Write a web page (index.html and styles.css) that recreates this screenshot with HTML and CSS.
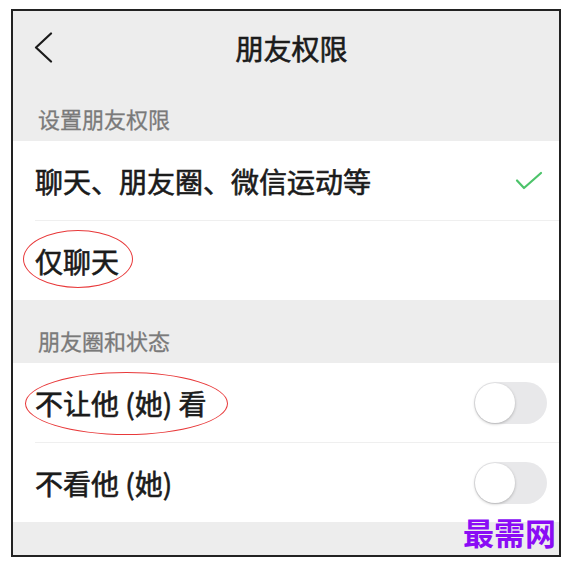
FILE: index.html
```html
<html>
<head>
<meta charset="utf-8">
<link rel="stylesheet" href="styles.css">
</head>
<body>
<div class="frame">

<div class="nav">
	<div class="back">
		<svg width="22" height="32" viewBox="0 0 22 32">
			<polyline points="17,1.5 2,15.5 17,29.5" fill="none" stroke="#1b1b1b" stroke-width="2.2" stroke-linecap="round" stroke-linejoin="round"/>
		</svg>
	</div>
	<div class="title">朋友权限</div>
	<div></div>
</div>

<div class="group-title first">设置朋友权限</div>
<div class="list">
	<div class="cell">
		<div class="cell-body">
			<span class="label">聊天、朋友圈、微信运动等</span>
			<svg class="check" width="28" height="20" viewBox="0 0 28 20">
				<polyline points="2,9.5 9,17 26,2" fill="none" stroke="#4cc36a" stroke-width="2.2" stroke-linecap="round" stroke-linejoin="round"/>
			</svg>
		</div>
	</div>
	<div class="cell">
		<div class="cell-body">
			<span class="label">仅聊天</span>
		</div>
		<div class="mark mark-small"></div>
	</div>
</div>

<div class="group-title">朋友圈和状态</div>
<div class="list">
	<div class="cell">
		<div class="cell-body">
			<span class="label">不让他 (她) 看</span>
			<div class="switch"><div class="knob"></div></div>
		</div>
		<div class="mark mark-wide"></div>
	</div>
	<div class="cell">
		<div class="cell-body">
			<span class="label">不看他 (她)</span>
			<div class="switch"><div class="knob"></div></div>
		</div>
	</div>
</div>

<div class="footer"></div>
<div class="watermark">最需网</div>

</div>
</body>
</html>
```

FILE: styles.css
```css
body
{
margin:0;
background-color:#ffffff;
font-family:"Noto Sans CJK SC", "Noto Sans", sans-serif;
}
.frame
{
position:relative;
margin:9px 0 0 11px;
width:546px;
height:544px;
border:2px solid #222222;
background-color:#ededed;
overflow:hidden;
}
.nav
{
display:grid;
grid-template-columns:1fr auto 1fr;
align-items:center;
height:74px;
}
.back
{
padding-left:21px;
height:32px;
}
.title
{
font-size:28px;
font-weight:400;
-webkit-text-stroke:0.6px #1b1b1b;
color:#1b1b1b;
padding-left:11px;
line-height:30px;
}
.group-title
{
font-size:22px;
font-weight:400;
-webkit-text-stroke:0.3px #7a7a7a;
color:#7a7a7a;
line-height:24px;
padding:28px 25px 11px;
}
.group-title.first
{
padding-top:21px;
}
.list
{
background-color:#ffffff;
}
.cell
{
position:relative;
padding-left:22px;
}
.cell-body
{
display:flex;
align-items:center;
justify-content:space-between;
height:79px;
padding-right:12px;
border-bottom:1px solid #efefef;
}
.cell:last-child .cell-body
{
border-bottom:none;
}
.label
{
font-size:28px;
font-weight:400;
-webkit-text-stroke:0.6px #1b1b1b;
color:#1b1b1b;
line-height:32px;
}
.check
{
margin-right:4px;
}
.switch
{
width:73px;
height:42px;
border-radius:21px;
background-color:#e8e8ea;
padding:1px;
box-sizing:border-box;
}
.knob
{
width:40px;
height:40px;
border-radius:50%;
background-color:#ffffff;
box-shadow:0 1px 3px rgba(0,0,0,0.25);
}
.mark
{
position:absolute;
border:1.5px solid #e8393a;
border-radius:50%;
}
.mark-small
{
left:10px;
top:9px;
width:108px;
height:56px;
}
.mark-wide
{
left:12px;
top:9px;
width:201px;
height:61px;
}
.footer
{
height:33px;
}
.watermark
{
position:absolute;
right:3px;
bottom:6px;
font-size:31px;
font-weight:bold;
line-height:34px;
color:#8a0cf5;
}
```
